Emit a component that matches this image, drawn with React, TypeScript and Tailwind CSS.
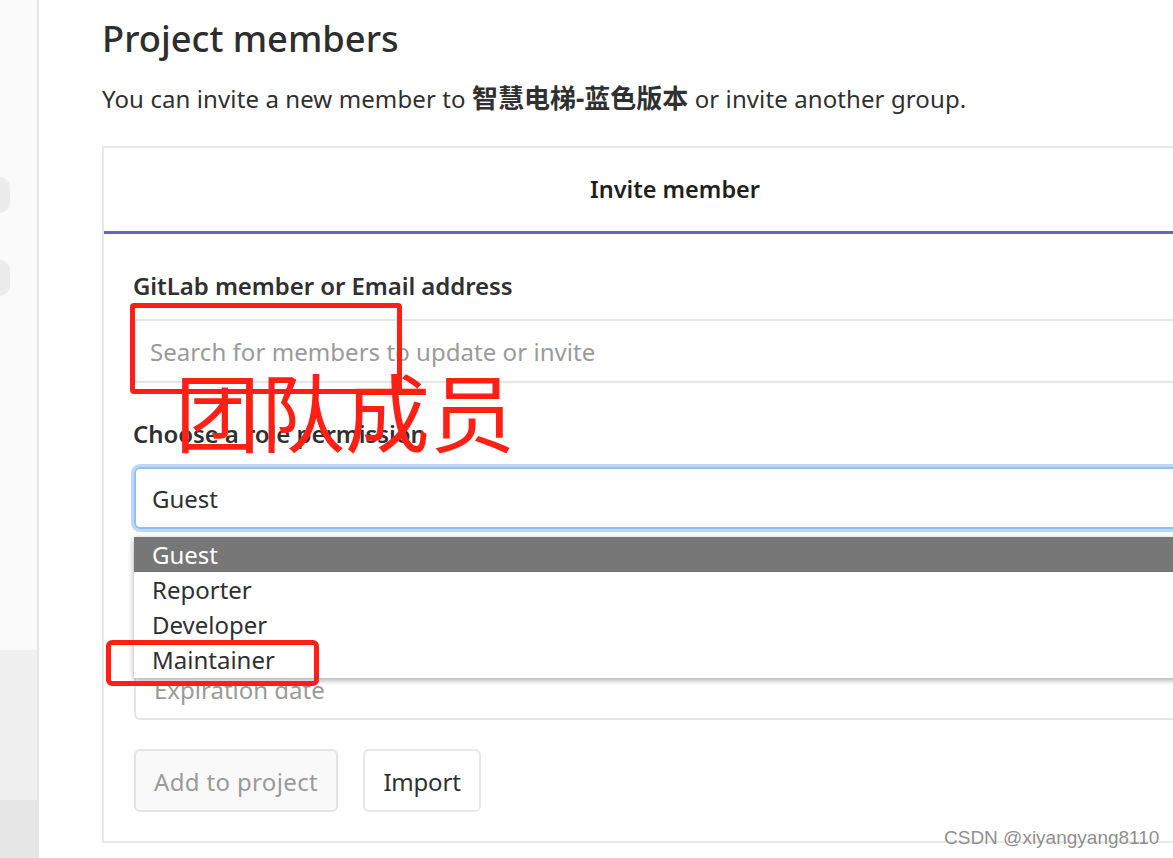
const font = { fontFamily: '"Noto Sans", "Noto Sans CJK SC", sans-serif' };

function Sidebar() {
  return (
    <div className="w-[39px] h-full shrink-0 flex flex-col border-r-2 border-[#e5e5e5] bg-[#fafafa]">
      <div className="h-[650px] pt-[177px] flex flex-col gap-[47px]">
        <div className="w-[10px] h-[36px] rounded-r-[10px] bg-[#ececec]" />
        <div className="w-[10px] h-[36px] rounded-r-[10px] bg-[#ececec]" />
      </div>
      <div className="h-[150px] bg-[#f0f0f0]" />
      <div className="flex-1 bg-[#e6e6e6]" />
    </div>
  );
}

function Dropdown() {
  return (
    <div className="absolute left-0 top-[70px] w-[1100px] h-[141px] bg-white shadow-[0_2px_6px_rgba(0,0,0,0.35)] text-[24px] leading-[35px] text-[#303030]">
      <div className="h-[35px] pl-[18px] bg-[#777777] text-white">Guest</div>
      <div className="h-[35px] pl-[18px]">Reporter</div>
      <div className="h-[35px] pl-[18px]">Developer</div>
      <div className="h-[35px] pl-[18px]">Maintainer</div>
    </div>
  );
}

function InviteCard() {
  return (
    <div className="w-[1146px] h-[697px] border-2 border-[#e8e8e8] bg-white">
      <div className="h-[86px] border-b-[3px] border-[#6666c4] flex items-center justify-center text-[23.5px] font-semibold text-[#1f1f1f]">
        Invite member
      </div>
      <div className="pl-[30px] pt-[35px]">
        <label className="block -ml-px h-[34px] text-[24px] tracking-[-0.07px] leading-[34px] font-semibold text-[#303030]">
          GitLab member or Email address
        </label>
        <div className="mt-[16px] h-[64px] flex items-center pl-[14px] pt-[2px] border-2 border-r-0 border-[#e5e5e5] rounded-l-[4px] text-[24px] tracking-[0.05px] text-[#9a9a9a]">
          Search for members to update or invite
        </div>
        <label className="block -ml-px mt-[34px] h-[34px] text-[24px] tracking-[-0.07px] leading-[34px] font-semibold text-[#303030]">
          Choose a role permission
        </label>
        <div className="relative mt-[16px]">
          <div className="h-[62px] flex items-center pl-[16px] pt-[2px] border-2 border-r-0 border-[#8fbff5] rounded-l-[6px] shadow-[0_0_0_3px_#b9d8fb] text-[24px] text-[#303030]">
            Guest
          </div>
          <Dropdown />
        </div>
        <div className="mt-[64px] h-[127px] flex items-end pb-[11px] pl-[18px] border-2 border-r-0 border-t-0 border-[#e5e5e5] rounded-bl-[6px] text-[24px] leading-[35px] text-[#9a9a9a]">
          Expiration date
        </div>
        <div className="mt-[29px] flex gap-[25px]">
          <button className="w-[204px] h-[63px] pt-[2px] rounded-[6px] border-2 border-[#e5e5e5] bg-[#f9f9f9] text-[24px] tracking-[0.35px] text-[#9a9a9a]">
            Add to project
          </button>
          <button className="w-[118px] h-[63px] pt-[2px] rounded-[6px] border-2 border-[#e8e8e8] bg-white text-[24px] tracking-[-0.2px] text-[#303030]">
            Import
          </button>
        </div>
      </div>
    </div>
  );
}

export default function App() {
  return (
    <div className="relative w-[1173px] h-[858px] overflow-hidden flex bg-white" style={font}>
      <Sidebar />
      <div className="pl-[63px] pt-[12px]">
        <h1 className="h-[52px] text-[36.3px] leading-[52px] font-medium text-[#2e2e2e]">Project members</h1>
        <p className="mt-[17px] h-[35px] text-[24px] tracking-[0.1px] leading-[35px] text-[#303030] whitespace-nowrap">
          You can invite a new member to <b className="text-[26px] font-bold tracking-normal">智慧电梯-蓝色版本</b> or invite another group.
        </p>
        <div className="mt-[30px]">
          <InviteCard />
        </div>
      </div>

      {/* red annotations drawn over the screenshot */}
      <div className="absolute left-[130px] top-[303px] w-[272px] h-[91px] border-[5px] border-[#ff2015] rounded-[4px]" />
      <div className="absolute left-[106px] top-[640px] w-[213px] h-[46px] border-[5px] border-[#ff2015] rounded-[6px]" />
      <div className="absolute left-[175px] top-[349px] text-[85px] leading-[120px] whitespace-nowrap text-[#ff2015]" style={{ fontFamily: '"Noto Sans CJK SC", sans-serif' }}>
        团队成员
      </div>
      <div className="absolute left-[944px] top-[827px] text-[19px] leading-[22px] whitespace-nowrap text-[#8f8f8f] [text-shadow:0_0_2px_#ffffff]" style={{ fontFamily: '"Liberation Sans", sans-serif' }}>
        CSDN @xiyangyang8110
      </div>
    </div>
  );
}
